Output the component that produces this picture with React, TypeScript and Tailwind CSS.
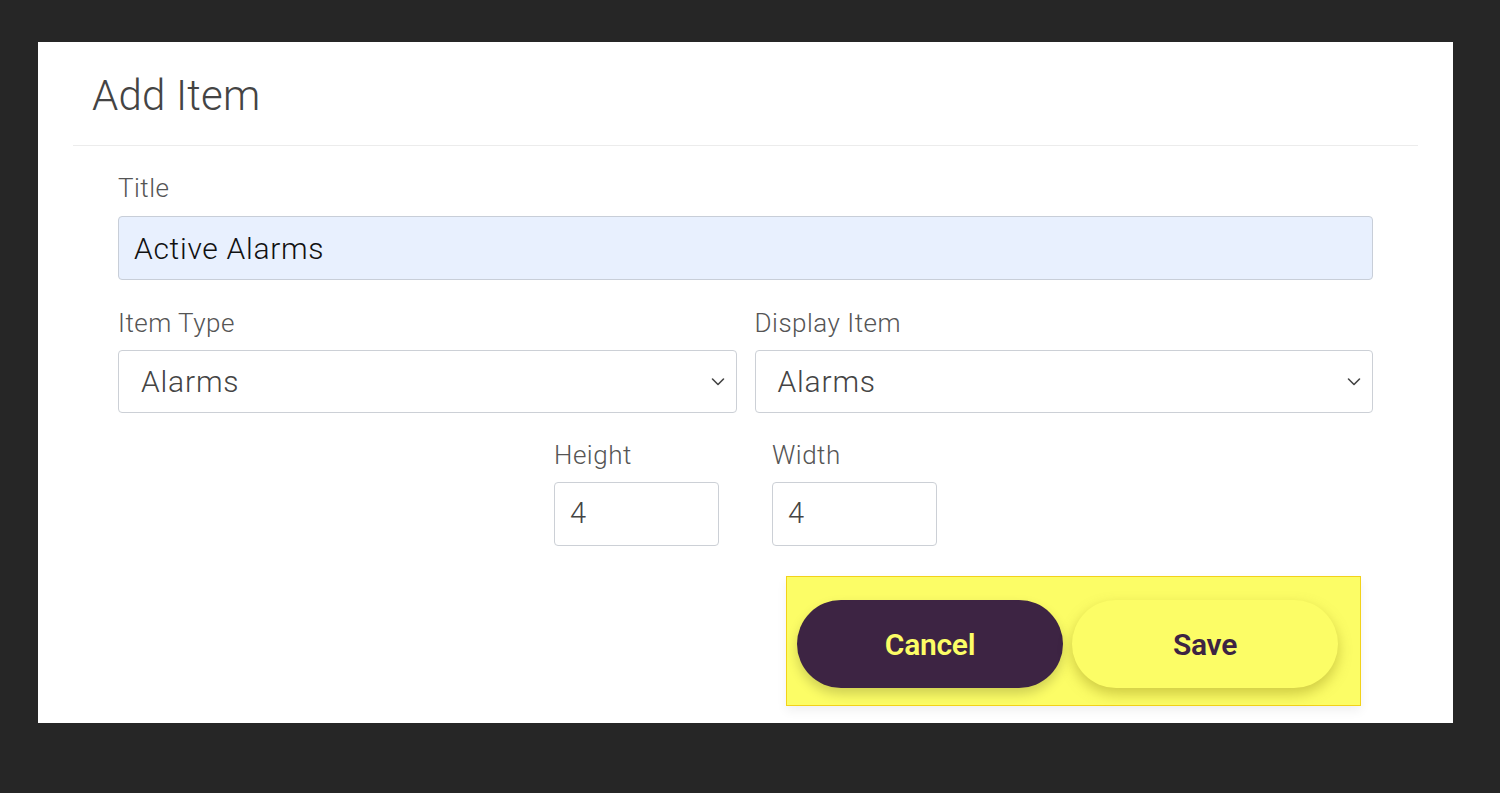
import React from 'react';

const font = { fontFamily: 'Roboto, "Liberation Sans", sans-serif' };

const Chevron = () => (
  <svg width="14" height="9" viewBox="0 0 14 9" fill="none" className="absolute right-[11px] top-1/2 -translate-y-1/2">
    <path d="M1.5 1.5 L7 7 L12.5 1.5" stroke="#444" strokeWidth="1.6" strokeLinecap="round" strokeLinejoin="round" />
  </svg>
);

const labelCls = 'text-[26px] font-light text-[#555] leading-none tracking-[0.5px]';

const SelectBox = ({ label, value }: { label: string; value: string }) => (
  <div className="flex-1 flex flex-col">
    <label className={`${labelCls} mb-[14px]`}>{label}</label>
    <div className="relative h-[63px] border border-[#ccd0d6] rounded-[4px] bg-white flex items-center pl-[22px]">
      <span className="text-[30px] font-light text-[#444] tracking-[0.8px]">{value}</span>
      <Chevron />
    </div>
  </div>
);

const SmallInput = ({ label, value }: { label: string; value: string }) => (
  <div className="flex flex-col w-[165px]">
    <label className={`${labelCls} mb-[14px]`}>{label}</label>
    <div className="h-[64px] border border-[#ccd0d6] rounded-[4px] bg-white flex items-center pl-[15px]">
      <span className="text-[29px] font-light text-[#444]">{value}</span>
    </div>
  </div>
);

export default function App() {
  return (
    <div className="w-[1500px] h-[793px] bg-[#262626] pt-[42px] pl-[38px]" style={font}>
      <div className="w-[1415px] h-[681px] bg-white flex flex-col">
        <div className="pl-[54px] pt-[28px] h-[103px]">
          <h1 className="text-[42px] font-light text-[#444] leading-[52px] tracking-[0.2px]">Add Item</h1>
        </div>
        <div className="mx-[35px] border-t border-[#ececec]" />

        <div className="px-[80px] pt-[29px] flex flex-col">
          <label className={`${labelCls} mb-[15px]`}>Title</label>
          <div className="h-[64px] border border-[#c8ced8] rounded-[4px] bg-[#e8f0fe] flex items-center pl-[15px]">
            <span className="text-[30px] font-light text-[#111] tracking-[0.7px]">Active Alarms</span>
          </div>

          <div className="flex gap-[18px] mt-[30px]">
            <SelectBox label="Item Type" value="Alarms" />
            <SelectBox label="Display Item" value="Alarms" />
          </div>

          <div className="flex justify-center gap-[53px] mt-[29px]">
            <SmallInput label="Height" value="4" />
            <SmallInput label="Width" value="4" />
          </div>

          <div className="flex justify-end mt-[30px] mr-[12px]">
            <div className="w-[575px] h-[130px] bg-[#fcfd66] border border-[#f2d21a] flex items-start pt-[23px] gap-[9px] pl-[10px] shadow-[0_5px_10px_rgba(0,0,0,0.06)]">
              <button className="w-[266px] h-[88px] rounded-full bg-[#3d2443] text-[#fcfd66] text-[30px] font-semibold shadow-[0_6px_12px_rgba(0,0,0,0.18)] tracking-[-0.3px]">
                Cancel
              </button>
              <button className="w-[266px] h-[88px] rounded-full bg-[#fcfd66] text-[#3d2443] text-[30px] font-semibold shadow-[0_6px_14px_rgba(120,110,0,0.35)] tracking-[-0.3px]">
                Save
              </button>
            </div>
          </div>
        </div>
      </div>
    </div>
  );
}
